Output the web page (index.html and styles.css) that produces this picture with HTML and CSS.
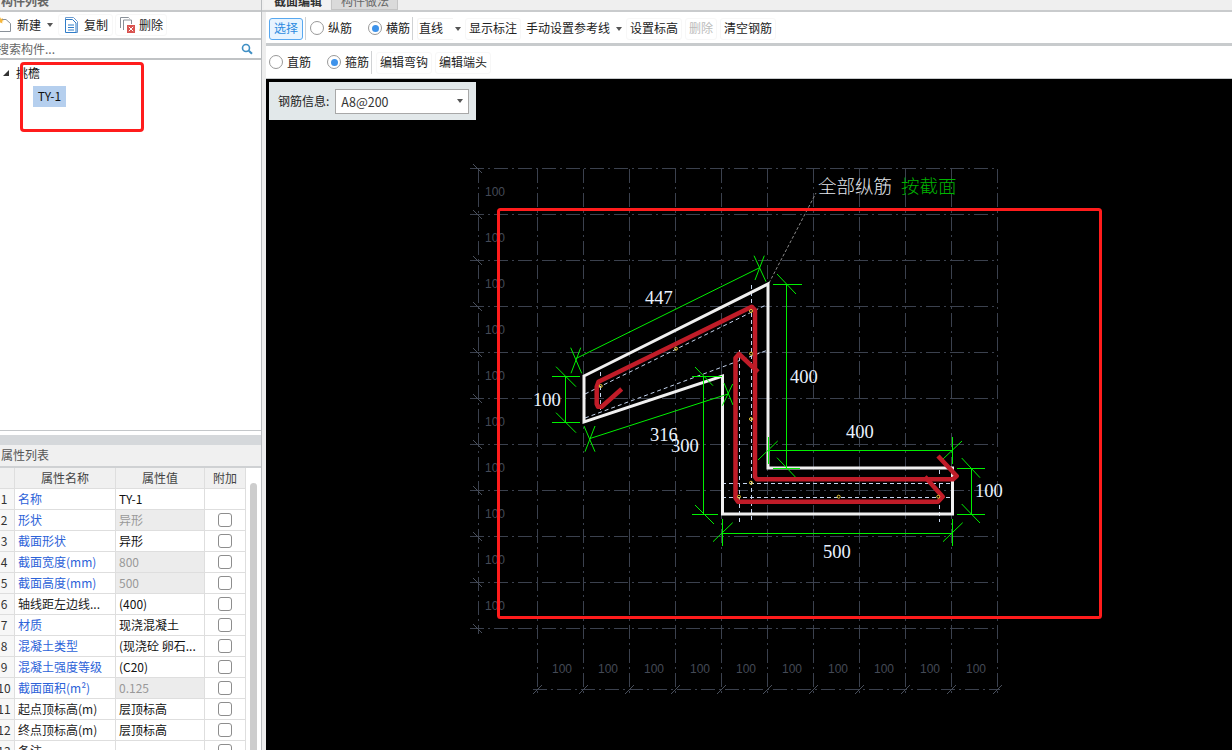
FILE: index.html
```html
<!DOCTYPE html>
<html lang="zh-CN">
<head>
<meta charset="utf-8">
<title>截面编辑</title>
<link rel="stylesheet" href="styles.css">
</head>
<body>
<div class="app">
  <aside class="side">
    <section class="list-panel">
      <div class="clip-title">构件列表</div>
      <div class="side-tools">
        <svg class="ico ico-new" viewBox="0 0 11 16"><path d="M-1 2.500h7l4.500 4v8h-11.500z" fill="#fff" stroke="#8a9199"/><path d="M0 0l1 2 2-1-1 2 2 1-2 .6.5 2-2-1.200-2 1.200" fill="#f5b63c"/></svg>
        <span class="st-label">新建</span>
        <i class="caret st-caret"></i>
        <span class="ghost st-copy">
          <svg class="ico" viewBox="0 0 13 16"><path d="M.5 3.500V.5h8l4 4v11H3" fill="none" stroke="#6f9cce"/><path d="M.5 2.500h7l3.500 3.500v9.500H.5z" fill="#fff" stroke="#2f7cc8"/><path d="M3 8h6M3 10.500h6M3 13h6" stroke="#2f7cc8"/></svg>
          <span>复制</span>
        </span>
        <span class="ghost st-del">
          <svg class="ico ico-del" viewBox="0 0 15 16"><path d="M.5 11V.5h8l1 1" fill="none" stroke="#8a9199"/><path d="M3.500 13V3h8v4" fill="#fff" stroke="#8a9199"/><rect x="7" y="8" width="8" height="8" fill="#d9534f"/><path d="M8.800 9.800l4.400 4.400M13.200 9.800l-4.400 4.400" stroke="#fff"/></svg>
          <span>删除</span>
        </span>
      </div>
      <div class="search">
        <span class="search-text">搜索构件...</span>
        <svg class="search-ico" viewBox="0 0 12 12"><circle cx="5" cy="5" r="3.500" fill="none" stroke="#3f8fc4" stroke-width="1.600"/><path d="M7.800 7.800l3.200 3" stroke="#3f8fc4" stroke-width="2"/></svg>
      </div>
      <div class="tree">
        <div class="tree-root"><i class="tree-arrow"></i><span>挑檐</span></div>
        <div class="tree-leaf"><span>TY-1</span></div>
      </div>
    </section>
    <section class="prop-panel">
      <div class="prop-title">属性列表</div>
      <div class="prop-body">
        <div class="prop-table">
          <div class="row head"><div></div><div>属性名称</div><div>属性值</div><div>附加</div></div>
          <div class="row"><div class="num">1</div><div class="name link">名称</div><div class="val">TY-1</div><div class="add"></div></div>
          <div class="row"><div class="num">2</div><div class="name link">形状</div><div class="val off">异形</div><div class="add"><i class="check"></i></div></div>
          <div class="row"><div class="num">3</div><div class="name link">截面形状</div><div class="val">异形</div><div class="add"><i class="check"></i></div></div>
          <div class="row"><div class="num">4</div><div class="name link">截面宽度(mm)</div><div class="val off">800</div><div class="add"><i class="check"></i></div></div>
          <div class="row"><div class="num">5</div><div class="name link">截面高度(mm)</div><div class="val off">500</div><div class="add"><i class="check"></i></div></div>
          <div class="row"><div class="num">6</div><div class="name">轴线距左边线...</div><div class="val">(400)</div><div class="add"><i class="check"></i></div></div>
          <div class="row"><div class="num">7</div><div class="name link">材质</div><div class="val">现浇混凝土</div><div class="add"><i class="check"></i></div></div>
          <div class="row"><div class="num">8</div><div class="name link">混凝土类型</div><div class="val">(现浇砼 卵石...</div><div class="add"><i class="check"></i></div></div>
          <div class="row"><div class="num">9</div><div class="name link">混凝土强度等级</div><div class="val">(C20)</div><div class="add"><i class="check"></i></div></div>
          <div class="row"><div class="num">10</div><div class="name link">截面面积(m²)</div><div class="val off">0.125</div><div class="add"><i class="check"></i></div></div>
          <div class="row"><div class="num">11</div><div class="name">起点顶标高(m)</div><div class="val">层顶标高</div><div class="add"><i class="check"></i></div></div>
          <div class="row"><div class="num">12</div><div class="name">终点顶标高(m)</div><div class="val">层顶标高</div><div class="add"><i class="check"></i></div></div>
          <div class="row"><div class="num">13</div><div class="name">备注</div><div class="val"></div><div class="add"><i class="check"></i></div></div>
        </div>
        <div class="scroll"><div class="thumb"></div></div>
      </div>
    </section>
  </aside>

  <main class="main">
    <div class="tabs">
      <div class="tab active">截面编辑</div>
      <div class="tab">构件做法</div>
    </div>
    <div class="bar bar-one">
      <span class="btn primary">选择</span>
      <i class="sep"></i>
      <label class="radio r-a"><i class="dot"></i>纵筋</label>
      <label class="radio r-b"><i class="dot on"></i>横筋</label>
      <i class="sep"></i>
      <span class="line-select">直线</span><i class="caret c-line"></i>
      <span class="btn b-show">显示标注</span>
      <span class="btn plain">手动设置参考线</span><i class="caret c-ref"></i>
      <span class="btn b-level">设置标高</span>
      <span class="btn off b-del">删除</span>
      <span class="btn b-clear">清空钢筋</span>
    </div>
    <div class="bar bar-two">
      <label class="radio"><i class="dot"></i>直筋</label>
      <label class="radio r-c"><i class="dot on"></i>箍筋</label>
      <i class="sep"></i>
      <span class="btn b-hook">编辑弯钩</span>
      <span class="btn b-end">编辑端头</span>
    </div>
    <div class="canvas">
      <svg class="drawing" viewBox="266 79 966 671">
        <path class="grid" d="M537.500 169V697M583.500 169V697M629.500 169V697M675.500 169V697M721.500 169V697M767.500 169V697M813.500 169V697M859.500 169V697M905.500 169V697M951.500 169V697M997.500 169V697"/>
        <path class="grid" d="M470 168.500H998M470 214.500H998M470 260.500H998M470 306.500H998M470 352.500H998M470 398.500H998M470 444.500H998M470 490.500H998M470 536.500H998M470 582.500H998M470 628.500H998"/>
        <path class="grid" d="M478.500 169V634M533 689.500H1000"/>
        <path class="tick" d="M473 164l9 9M473 210l9 9M473 256l9 9M473 302l9 9M473 348l9 9M473 394l9 9M473 440l9 9M473 486l9 9M473 532l9 9M473 578l9 9M473 624l9 9"/>
        <path class="tick" d="M533 694l9-9M579 694l9-9M625 694l9-9M671 694l9-9M717 694l9-9M763 694l9-9M809 694l9-9M855 694l9-9M901 694l9-9M947 694l9-9M993 694l9-9"/>
        <g class="g-label">
          <text x="485" y="196">100</text><text x="485" y="242">100</text><text x="485" y="288">100</text><text x="485" y="334">100</text><text x="485" y="380">100</text>
          <text x="485" y="426">100</text><text x="485" y="472">100</text><text x="485" y="518">100</text><text x="485" y="564">100</text><text x="485" y="610">100</text>
          <text x="552" y="673">100</text><text x="598" y="673">100</text><text x="644" y="673">100</text><text x="690" y="673">100</text><text x="736" y="673">100</text>
          <text x="782" y="673">100</text><text x="828" y="673">100</text><text x="874" y="673">100</text><text x="920" y="673">100</text><text x="966" y="673">100</text>
        </g>

        <path class="leader" d="M769 283L816 193"/>
        <path class="inner" d="M722 483.500H952M722 497.500H952M739.500 350V522M751.500 285V522M939.500 470V522M600.500 372V410M585 394L768 304M585 418L768 350"/>

        <polygon class="concrete" points="584,376 768,284 768,468 952.500,468 952.500,514 722.500,514 722.500,376 584,422"/>

        <path class="dim" d="M576 358.500L760 267.500M570.700 347.700L581.700 373.300M580.700 347.700L571 373.300M754 255.700L766 281.700M764.300 255.700L755 280"/>
        <path class="dim" d="M565.500 376V422M552 376.500H580M552 422.500H580M556 366.700L576 386.700M556 412.700L576 432.700"/>
        <path class="dim" d="M590 438.500L728 394M732.700 384L722.300 405.700M724 383L733 405M584 426L595 451.700M595 426L585 451.700"/>
        <path class="dim" d="M703.500 376V514M692 376.500H722M692 514.500H718M695 367L713 385.700M695 505L714 524"/>
        <path class="dim" d="M786.500 284V468M773 284.500H802M773 468.500H800M777 274L796 294M777 457.700L796 477.700"/>
        <path class="dim" d="M768 450.500H952.500M768.500 437V464M952.500 437V464M758 460L777.700 441M943 459L962 441"/>
        <path class="dim" d="M971.500 468V514M957 468.500H985M957 514.500H985M961.700 458L980 477.700M961.700 504L980 523"/>
        <path class="dim" d="M722 533.500H952M722.500 519V546M952.500 519V546M713 541.700L732.700 522.700M943 541.700L962.700 522.700"/>

        <path class="rebar" d="M621.700 389L601.700 406.700L598 406.700L596.700 404V386.700L598.500 381.700L751.700 306.700L755 310V476.700L756.700 479.300H953L956.700 476L938 456"/>
        <path class="rebar" d="M758 372L739 354L735.500 358V498L738 501.700H938L942.700 496.700L925 476.700"/>

        <g class="node">
          <circle cx="600.700" cy="386" r="1.500"/><circle cx="676" cy="348.700" r="1.500"/><circle cx="751" cy="311" r="1.500"/><circle cx="751" cy="353.700" r="1.500"/><circle cx="751" cy="419" r="1.500"/>
          <circle cx="751" cy="482.700" r="1.500"/><circle cx="739" cy="496.700" r="1.500"/><circle cx="838.700" cy="496.700" r="1.500"/><circle cx="938.300" cy="496.700" r="1.500"/>
        </g>

        <g class="d-label">
          <text x="645" y="304">447</text><text x="533" y="406">100</text><text x="650" y="441">316</text><text x="671" y="452">300</text>
          <text x="790" y="383">400</text><text x="846" y="438">400</text><text x="975" y="497">100</text><text x="823" y="558">500</text>
        </g>
        <text class="note" x="818" y="193">全部纵筋</text>
        <text class="note green" x="901" y="193">按截面</text>

        <rect class="mark" x="498.500" y="209.500" width="602" height="408" rx="2"/>
      </svg>
      <div class="info">
        <span class="info-label">钢筋信息:</span>
        <div class="info-select"><span>A8@200</span><i class="caret"></i></div>
      </div>
    </div>
  </main>
  <div class="tree-mark"></div>
</div>
</body>
</html>
```
FILE: styles.css
```css
* { box-sizing: border-box; }
html, body { margin: 0; height: 100%; overflow: hidden; background: #fff; }
body { font: 12px/1.2 "Noto Sans CJK SC", "Noto Sans", sans-serif; color: #222; }
i { display: block; font-style: normal; }

.app { position: relative; display: flex; width: 1232px; height: 750px; overflow: hidden; }

/* left column */
.side { width: 262px; flex: none; display: flex; flex-direction: column; border-right: 1px solid #b9bcbf; }
.list-panel { height: 431px; flex: none; display: flex; flex-direction: column; background: #fff; border-bottom: 1px solid #c4c7ca; }
.clip-title { height: 10px; flex: none; overflow: hidden; background: #eeeeee; color: #666; font-weight: 700; line-height: 2px; padding-left: 1px; }
.side-tools { height: 30px; flex: none; display: flex; align-items: center; background: #fff; border-top: 2px solid #c6c8ca; border-bottom: 2px solid #c6c8ca; }
.ico { width: 13px; height: 16px; flex: none; }
.ico-new { width: 11px; }
.ico-del { width: 15px; }
.st-label { margin-left: 6px; }
.caret { width: 0; height: 0; flex: none; border: 3.5px solid transparent; border-top: 4px solid #555; border-bottom: 0; }
.st-caret { margin-left: 6px; }
.ghost { display: flex; align-items: center; height: 22px; border: 1px solid #f7f7f7; border-radius: 3px; }
.st-copy { margin-left: 5px; padding: 0 4px 0 6px; gap: 6px; }
.st-del { margin-left: 2px; padding: 0 3px 0 4px; gap: 4px; }
.search { height: 20px; flex: none; display: flex; align-items: center; justify-content: space-between; padding-right: 8px; border-bottom: 2px solid #c0c3c5; overflow: hidden; color: #666; }
.search-text { margin-left: -3px; }
.search-ico { width: 12px; height: 12px; flex: none; }
.tree { flex: 1; padding-top: 3px; color: #111; }
.tree-root { display: flex; align-items: center; height: 20px; }
.tree-arrow { width: 0; height: 0; margin: 0 7px 0 3px; border-style: solid; border-width: 0 0 6px 6px; border-color: transparent transparent #333 transparent; }
.tree-leaf { margin: 3px 0 0 33px; width: 33px; height: 21px; display: flex; align-items: center; justify-content: center; background: #b5cfee; }

.prop-panel { flex: 1; min-height: 0; display: flex; flex-direction: column; border-top: 4px solid #fff; background: #fff; }
.prop-panel::before { content: ""; height: 10px; flex: none; background: #d5d8db; }
.prop-title { height: 23px; flex: none; display: flex; align-items: center; background: #f0f0f0; border-bottom: 2px solid #cfd1d3; color: #555; padding-left: 1px; }
.prop-body { flex: 1; min-height: 0; display: flex; overflow: hidden; }
.prop-table { width: 246px; flex: none; }
.row { display: grid; grid-template-columns: 15px 101px 89px 41px; height: 21px; border-bottom: 1px solid #dedede; }
.row > div { display: flex; align-items: center; overflow: hidden; white-space: nowrap; border-right: 1px solid #dedede; }
.head { background: #f0f0f0; height: 21px; color: #444; }
.head > div { justify-content: center; }
.num { justify-content: center; padding-right: 6px; color: #333; background: #f7f7f7; }
.name { padding-left: 3px; color: #222; }
.link { color: #2c62d8; }
.val { padding-left: 3px; color: #111; }
.val.off { background: #ececec; color: #999; }
.add { justify-content: center; }
.check { width: 14px; height: 14px; border: 1px solid #8d8d8d; border-radius: 3px; background: #fff; }
.scroll { flex: 1; padding: 15px 4px 0 4px; background: #fff; }
.thumb { height: 100%; background: #cdcdcd; border-radius: 4px 4px 0 0; }

/* main column */
.main { flex: 1; min-width: 0; display: flex; flex-direction: column; padding-left: 4px; background: #ededed; }
.tabs { height: 12px; flex: none; display: flex; align-items: flex-start; margin-left: -4px; padding-left: 1px; background: #efefef; border-bottom: 2px solid #c9cbcd; overflow: hidden; }
.tab { height: 10px; line-height: 2px; padding: 0 8px 0 9px; overflow: hidden; color: #666; background: #dadada; border: 1px solid #c4c4c4; border-top: 0; }
.tab.active { padding: 0 8px 0 10px; background: #f2f2f2; color: #333; font-weight: 700; border-color: #efefef; }
.bar { display: flex; align-items: center; flex: none; background: #fff; color: #222; }
.bar-one { height: 31px; padding: 2px 0 0 3px; }
.bar-two { height: 36px; padding: 1px 0 0 3px; border-top: 3px solid #c8cbcd; border-bottom: 1px solid #c8cbcd; }
.btn { display: flex; align-items: center; height: 22px; padding: 0 3px; border: 1px solid #f7f7f7; border-radius: 3px; white-space: nowrap; }
.btn.primary { background: #e8f4ff; border-color: #58a8f0; color: #2b8ae0; padding: 0 4px; }
.btn.plain { border-color: transparent; margin-left: 1px; }
.btn.off { color: #bbb; margin-left: 3px; }
.sep { width: 1px; height: 23px; background: #d0d2d4; margin-left: 2px; }
.radio { display: flex; align-items: center; gap: 4px; white-space: nowrap; }
.bar-one .sep + .radio { margin-left: 4px; }
.r-b { margin-left: 16px; }
.r-c { margin-left: 16px; }
.dot { position: relative; width: 14px; height: 14px; border: 1px solid #999; border-radius: 50%; background: #fff; }
.dot.on::after { content: ""; position: absolute; inset: 2.500px; border-radius: 50%; background: #3d92ea; }
.line-select { width: 36px; height: 22px; margin-left: 4px; padding-left: 1px; display: flex; align-items: center; border: 1px solid #f4f4f4; border-right: 0; border-radius: 3px 0 0 3px; }
.c-line { margin-left: 2px; margin-right: 4px; }
.c-ref { margin-left: 2px; margin-right: 4px; }
.b-clear { margin-left: 3px; }
.b-hook { margin-left: 4px; }
.b-end { margin-left: 3px; }

.canvas { position: relative; flex: 1; min-height: 0; background: #000; }
.drawing { display: block; width: 966px; height: 671px; }
.grid { fill: none; stroke: #3b414e; stroke-width: 1; stroke-dasharray: 14 4 2 4; }
.tick { fill: none; stroke: #4a505c; stroke-width: 1; }
.g-label text { font: 12px "Liberation Sans", sans-serif; fill: #444a56; }
.leader { fill: none; stroke: #8a8a8a; stroke-width: 1; stroke-dasharray: 3 2; }
.inner { fill: none; stroke: #c4d4ee; stroke-width: 1; stroke-dasharray: 4 3; }
.concrete { fill: none; stroke: #f0f0f0; stroke-width: 3; stroke-linejoin: miter; }
.dim { fill: none; stroke: #00f000; stroke-width: 1; }
.rebar { fill: none; stroke: #c01c28; stroke-width: 4.500; stroke-linejoin: round; }
.node circle { fill: none; stroke: #e8c838; stroke-width: 1; }
.d-label text { font: 18.500px "Liberation Serif", serif; fill: #eaf2ff; }
.note { font: 18.500px "Noto Sans CJK SC", sans-serif; font-weight: 300; fill: #e4e8ee; }
.note.green { fill: #00b400; }
.mark { fill: none; stroke: #ff1c1c; stroke-width: 3; }

.info { position: absolute; left: 3px; top: 3px; width: 207px; height: 38px; display: flex; align-items: center; padding-left: 9px; gap: 6px; background: #e2e8ea; }
.info-label { white-space: nowrap; color: #222; }
.info-select { width: 134px; height: 25px; display: flex; align-items: center; justify-content: space-between; padding: 0 5px; background: #fff; border: 1px solid #a8a8a8; color: #333; font-size: 12.500px; }

.tree-mark { position: absolute; left: 20px; top: 62px; width: 124px; height: 70px; border: 3px solid #ff1c1c; border-radius: 4px; }
```
